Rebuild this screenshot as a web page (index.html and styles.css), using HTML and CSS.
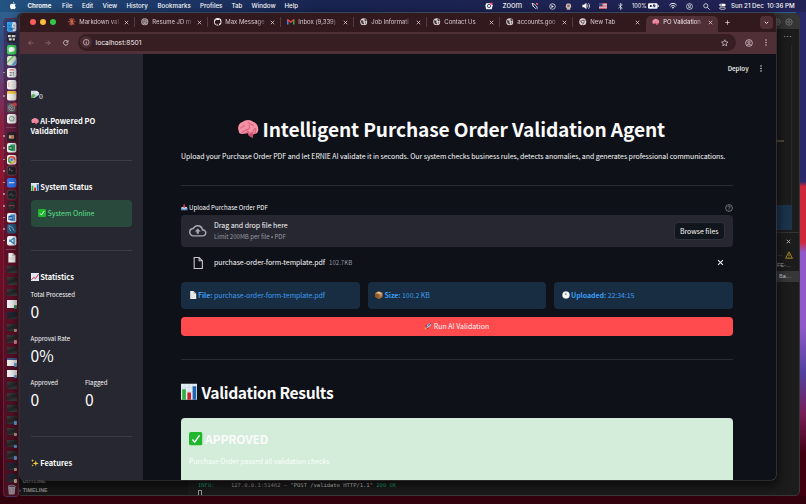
FILE: index.html
```html
<!DOCTYPE html>
<html lang="en">
<head>
<meta charset="utf-8">
<title>PO Validation</title>
<link rel="stylesheet" href="styles.css">
</head>
<body>
<svg class="defs" aria-hidden="true">
  <symbol id="brain" viewBox="0 0 24 20"><path d="M2 13C0 9 2 4 6 3c3-3 9-3 12 0 4 1 6 6 5 10-1 3-4 3-5 3l-1 4-4-2-1-3-6 1c-3 0-4-1-4-3z" fill="#f591a5"/><path d="M4 10c1-3 4-1 4-4m-3 8c3 0 3-3 6-3s3-3 2-5m-4 9c4-1 6 1 8-1s1-4 4-4M12 3c1 3 5 1 6 4m-8 5l3 2m5 1c2 0 3-2 2-4" fill="none" stroke="#d95f7c" stroke-width="1.1"/><path d="M12 16l6-1-1 5-4-2z" fill="#c94d69"/></symbol>
  <symbol id="chart" viewBox="0 0 20 20"><path d="M0 0h20v20H0z" fill="#e2edf4"/><path d="M0 5h20M0 10h20M0 15h20M5 0v20M10 0v20M15 0v20" stroke="#b9cedb" stroke-width=".5"/><path d="M1.500 7h4.500v13H1.500z" fill="#2fae3b"/><path d="M8 11h4.500v9H8z" fill="#c8242d"/><path d="M14.500 3H19v17h-4.500z" fill="#2464b4"/></symbol>
  <symbol id="trend" viewBox="0 0 20 20"><path d="M0 0h20v20H0z" fill="#e9eff3"/><path d="M0 5h20M0 10h20M0 15h20M5 0v20M10 0v20M15 0v20" stroke="#b9cedb" stroke-width=".6"/><path d="M1 17l6-6 4 3 8-11" fill="none" stroke="#cf2438" stroke-width="2.500"/></symbol>
  <symbol id="check" viewBox="0 0 20 20"><rect width="20" height="20" rx="3" fill="#20b62d"/><path d="M5 11l3.500 4L15.500 5" fill="none" stroke="#fff" stroke-width="2.200"/></symbol>
  <symbol id="sparkles" viewBox="0 0 20 20"><path d="M12 3l1.500 6 6 2-6 2-1.500 6-1.500-6-6-2 6-2zM4 0l1 3 3 1-3 1-1 3-1-3-3-1 3-1zM4 13l.8 2.300L7 16l-2.200.8L4 19l-.8-2.200L1 16l2.200-.7z" fill="#f4c944"/></symbol>
  <symbol id="inbox" viewBox="0 0 20 20"><path d="M2 9h16l2 5v5H0v-5z" fill="#bdd3e5"/><path d="M0 14h6l2 2h4l2-2h6v5H0z" fill="#5690c8"/><path d="M8 1h4v6h3l-5 6-5-6h3z" fill="#db3546"/></symbol>
  <symbol id="page" viewBox="0 0 20 20"><path d="M3 0h8l7 7v13H3z" fill="#eee"/><path d="M11 0v7h7z" fill="#b5bbc0"/><path d="M5 10h10M5 13h10M5 16h8" stroke="#c9cccf"/></symbol>
  <symbol id="box" viewBox="0 0 20 20"><path d="M1 5l9-4 9 4v10l-9 5-9-5z" fill="#a9703f"/><path d="M1 5l9 4v11l-9-5z" fill="#8f5a30"/><path d="M1 5l9-4 9 4-9 4z" fill="#d3a16b"/><path d="M5 3l9 4v5l2-1V6L7 2z" fill="#ecd0a3"/></symbol>
  <symbol id="clock" viewBox="0 0 20 20"><circle cx="10" cy="10" r="9.500" fill="#b9bcc0"/><circle cx="10" cy="10" r="8" fill="#fafafa"/><path d="M10 4v6.500L7.500 6" fill="none" stroke="#444" stroke-width="1.200"/></symbol>
  <symbol id="rocket" viewBox="0 0 20 20"><path d="M5 13L3 9l5-2 4 8-2 4z" fill="#8e3645"/><path d="M6 13C7 7 12 2 19 1c0 7-5 12-11 14z" fill="#b9c6d2"/><path d="M13 2l5 5 1-6z" fill="#a92a38"/><circle cx="13" cy="7" r="2" fill="#275a80"/><path d="M8 12l4-4" stroke="#47637c" stroke-width="2"/><path d="M1 19l2-6 4 4z" fill="#ffb42c"/></symbol>
  <symbol id="globe" viewBox="0 0 20 20"><circle cx="10" cy="10" r="9.500" fill="#d8d0d2"/><path d="M3 6c3-1 4 1 7 1l-2 4 3 2-1 4C5 17 2 12 3 6zm9-4c3 0 5 3 6 5l-3 2-3-3zm1 10l4-1-3 5z" fill="#48373c"/></symbol>
  <symbol id="gear" viewBox="0 0 20 20"><circle cx="10" cy="10" r="8" fill="none" stroke="currentColor" stroke-width="2"/><circle cx="10" cy="10" r="3" fill="none" stroke="currentColor" stroke-width="2"/><path d="M10 2v5M10 13v5M2 10h5M13 10h5" stroke="currentColor"/></symbol>
  <symbol id="person" viewBox="0 0 20 20"><circle cx="10" cy="10" r="8.500" fill="none" stroke="currentColor" stroke-width="1.800"/><circle cx="10" cy="8" r="3" fill="none" stroke="currentColor" stroke-width="1.800"/><path d="M4 16c2-4 10-4 12 0" fill="none" stroke="currentColor" stroke-width="1.800"/></symbol>
  <symbol id="x" viewBox="0 0 10 10"><path d="M1.500 1.500l7 7m0-7l-7 7" stroke="currentColor" stroke-width="1.500" fill="none"/></symbol>
  <symbol id="dots" viewBox="0 0 10 20"><g fill="currentColor"><circle cx="5" cy="3" r="2"/><circle cx="5" cy="10" r="2"/><circle cx="5" cy="17" r="2"/></g></symbol>
</svg>

<div class="desktop">
  <header class="menubar">
    <svg class="apple" viewBox="0 0 16 20"><path d="M11 0c0 2-1 4-3.500 4.300C7.500 2 9 .5 11 0zM8 5.500c1 0 2-1 4-1 1.500 0 2.500.8 3.200 1.700-3.200 2-2.600 6 .6 7.300C15 16.500 13 19.500 11 19.500c-1 0-1.700-.6-3-.6s-2 .6-3 .6C2.500 19.500 0 15 0 11c0-4 2.500-6.300 5-6.300 1.300 0 2.200.8 3 .8z" fill="#fff"/></svg>
    <nav class="menus"><b>Chrome</b><span>File</span><span>Edit</span><span>View</span><span>History</span><span>Bookmarks</span><span>Profiles</span><span>Tab</span><span>Window</span><span>Help</span></nav>
    <div class="status">
      <svg class="s8" viewBox="0 0 20 20"><path d="M3 3h13l3 5-2 10H3L1 9z" fill="#fff"/><circle cx="10" cy="10" r="4" fill="none" stroke="#23285b" stroke-width="2"/><circle cx="16" cy="4" r="3" fill="#ff4562"/></svg>
      <span class="zoomword">zoom</span>
      <svg class="s8" viewBox="0 0 20 20"><path d="M2 4l6 1 9 9M4 9l8 8M13 3l3 3M3 3l3 9M13 14l4 4" stroke="#fff" stroke-width="2" fill="none"/><circle cx="16" cy="5" r="2.500" fill="#f24d66"/></svg>
      <svg class="s7" viewBox="0 0 20 20"><circle cx="10" cy="10" r="8" fill="none" stroke="#fff" stroke-width="2"/><path d="M7 6l7 4-7 4z" fill="#fff"/></svg>
      <svg class="s7" viewBox="0 0 20 20"><path d="M3 5c1-5 13-5 14 0l1 7-3 2v5H5v-5l-3-2z" fill="#cfbfc0"/><circle cx="10" cy="8" r="4" fill="#a06f69"/></svg>
      <svg class="s8" viewBox="0 0 20 20"><path d="M1 7h4l6-5v16l-6-5H1z" fill="#fff"/><path d="M13 6c2 2 2 6 0 8M16 3c4 4 4 10 0 14" fill="none" stroke="#fff" stroke-width="1.800"/></svg>
      <svg class="s8" viewBox="0 0 20 14"><path d="M0 0h20v14H0z" fill="#eee"/><path d="M0 1h20M0 5h20M0 9h20M0 13h20" stroke="#d83b50" stroke-width="2"/><path d="M0 0h9v8H0z" fill="#334a83"/></svg>
      <svg class="s7" viewBox="0 0 20 20"><path d="M4 5l11 10-5 4V1l5 4L4 15" fill="none" stroke="#fff" stroke-width="1.800"/></svg>
      <span class="battery">100%<svg viewBox="0 0 24 12"><rect width="21" height="12" rx="3" fill="#fff"/><path d="M22.500 4v4" stroke="#fff" stroke-width="2"/><path d="M4 4h4v4H4zm8-2l-2 5h4l-2 4 6-6h-4l1-3z" fill="#23285b"/></svg></span>
      <svg class="s8" viewBox="0 0 20 16"><path d="M1 6c5-6 13-6 18 0M4 10c3-4 9-4 12 0" fill="none" stroke="#fff" stroke-width="2.400"/><path d="M7 12c2-2 4-2 6 0l-3 3z" fill="#fff"/></svg>
      <svg class="s7"><use href="#person"/></svg>
      <svg class="s7" viewBox="0 0 20 20"><circle cx="8" cy="8" r="6" fill="none" stroke="#fff" stroke-width="2"/><path d="M12.500 12.500L19 19" stroke="#fff" stroke-width="2.400"/></svg>
      <svg class="s7" viewBox="0 0 20 20"><rect x="1" y="2" width="18" height="7" rx="3.500" fill="#fff"/><rect x="2" y="12" width="16" height="6" rx="3" fill="none" stroke="#fff" stroke-width="2"/><circle cx="6" cy="5.500" r="2" fill="#23285b"/></svg>
    </div>
    <time>Sun 21 Dec&nbsp; 10:36 PM</time>
  </header>

  <section class="editor">
    <div class="editor-title"><svg><use href="#gear"/></svg><svg><use href="#gear"/></svg></div>
    <div class="editor-body">
      <aside class="rail">
        <div class="more">⋯</div>
        <div class="minimap"><i></i></div>
        <div class="hilite"></div>
        <div class="panel-tools"><svg><use href="#x"/></svg></div>
        <div class="term-item warn">…<svg viewBox="0 0 20 20"><path d="M10 2l8.500 16h-17z" fill="none" stroke="#c2a02c" stroke-width="2"/><path d="M10 8v5m0 1.500v2" stroke="#c2a02c" stroke-width="2"/></svg></div>
        <div class="term-item">FE-…</div>
        <div class="term-item on">Ba…</div>
      </aside>
    </div>
    <footer class="editor-foot">
      <div class="outline"><p>OUTLINE</p><p><span>›</span>TIMELINE</p></div>
      <div class="log"><p><em>INFO:</em><span>127.0.0.1:51462 – <b>"POST /validate HTTP/1.1"</b> <em>200 OK</em></span></p><i></i></div>
    </footer>
  </section>

  <aside class="dock">
    <div class="d run"><svg viewBox="0 0 20 20"><rect width="20" height="20" rx="4" fill="#eaf4fb"/><path d="M4 0h8l-2 11h2v9H4a4 4 0 01-4-4V4a4 4 0 014-4z" fill="#2c9bf0"/><path d="M5 6v3m10-3v3M4 13c4 3 8 3 12 0" stroke="#1b3b60" stroke-width="1.500" fill="none"/></svg></div>
    <div class="d"><svg viewBox="0 0 20 20"><rect width="20" height="20" rx="4" fill="#25242c"/><path d="M2 4h6v5H2zm8 0h8v5h-8zM4 11h6v5H4zm8 0h5v5h-5z" fill="#dedee0"/></svg></div>
    <div class="d"><svg viewBox="0 0 20 20"><rect width="20" height="20" rx="4" fill="#42cf5c"/><ellipse cx="10" cy="9.500" rx="6.500" ry="5" fill="#fff"/><path d="M5 12l-1 4 5-2z" fill="#fff"/></svg></div>
    <div class="d"><svg viewBox="0 0 20 20"><rect width="20" height="20" rx="4" fill="#dfe8d0"/><path d="M0 12L12 0h4L0 16z" fill="#63c865"/><path d="M8 20L20 7v8l-4 5z" fill="#67aeea"/></svg></div>
    <div class="d run"><svg viewBox="0 0 20 20"><rect width="20" height="20" rx="4" fill="#f7f5f6"/><path d="M5 4h10" stroke="#e84e50" stroke-width="2"/><text x="4" y="16" font-size="11">21</text></svg></div>
    <div class="d"><svg viewBox="0 0 20 20"><rect width="20" height="20" rx="4" fill="#f7f5f6"/><path d="M4 5v10" stroke="#e89350" stroke-width="1.500"/><path d="M7 5h9M7 10h9M7 15h9" stroke="#ccc"/></svg></div>
    <div class="d run"><svg viewBox="0 0 20 20"><rect width="20" height="20" rx="4" fill="#f8f4eb"/><path d="M0 6V4a4 4 0 014-4h12a4 4 0 014 4v2z" fill="#f6c847"/></svg></div>
    <div class="d"><svg class="dg" viewBox="0 0 20 20"><rect width="20" height="20" rx="4" fill="#555158"/><use href="#gear" x="2" y="2" width="16" height="16"/><circle cx="17" cy="3" r="4" fill="#f34646"/></svg></div>
    <div class="d"><svg viewBox="0 0 20 20"><rect width="20" height="20" rx="4" fill="#ecefed"/><circle cx="10" cy="10" r="5" fill="none" stroke="#769087" stroke-width="2"/><path d="M7 13l6-6" stroke="#769087"/></svg></div>
    <hr>
    <div class="d run"><svg viewBox="0 0 20 20"><rect width="20" height="20" rx="4" fill="#29242b"/><path d="M4 7h11v7H4z" fill="#cbb099"/><path d="M9 7h5v7H9z" fill="#ce7844"/></svg></div>
    <div class="d run"><svg viewBox="0 0 20 20"><rect width="20" height="20" rx="4" fill="#f4f7f5"/><path d="M7 3h10v14H7z" fill="#36a66b"/><path d="M3 6h9v9H3z" fill="#13743f"/><path d="M5 8l5 5m0-5l-5 5" stroke="#fff" stroke-width="1.300"/></svg></div>
    <div class="d run"><svg viewBox="0 0 20 20"><rect width="20" height="20" rx="4" fill="#f6f4f4"/><circle cx="10" cy="10" r="8" fill="#e84939"/><path d="M10 10L3 6a8 8 0 006 12z" fill="#3dac5a"/><path d="M10 10h8a8 8 0 01-9 8z" fill="#f7cc43"/><circle cx="10" cy="10" r="3.800" fill="#4484e5" stroke="#fff" stroke-width="1.200"/></svg></div>
    <div class="d run"><svg viewBox="0 0 20 20"><rect x=".5" y=".5" width="19" height="19" rx="4" fill="#242127" stroke="#777"/><path d="M4 5l3 2-3 2m4 1h4" stroke="#ccc" fill="none"/></svg></div>
    <div class="d run"><svg viewBox="0 0 20 20"><rect width="20" height="20" rx="4" fill="#2e73e8"/><path d="M4 10h12" stroke="#d5e5ff" stroke-width="2.500"/></svg></div>
    <div class="d run"><svg viewBox="0 0 20 20"><rect x=".5" y=".5" width="19" height="19" rx="4" fill="#202328" stroke="#666"/><path d="M3 11h4l2-4 3 7 2-3h3" stroke="#6d7e78" fill="none"/></svg></div>
    <div class="d run"><svg viewBox="0 0 20 20"><rect width="20" height="20" rx="4" fill="#28252b"/><circle cx="10" cy="10" r="6" fill="none" stroke="#55525a"/><path d="M4 10h12" stroke="#db4650" stroke-width="1.500"/></svg></div>
    <div class="d run"><svg viewBox="0 0 20 20"><rect width="20" height="20" rx="4" fill="#f3f6fa"/><path d="M7 3h10v14H7z" fill="#4898dc"/><path d="M3 6h9v9H3z" fill="#1e57a9"/><path d="M4 8l2 5 2-4 1 4 2-5" stroke="#fff" fill="none"/></svg></div>
    <div class="d run"><svg viewBox="0 0 20 20"><rect width="20" height="20" rx="4" fill="#26577f"/><path d="M3 4c6 0 10 4 11 9l3 3M4 7l4 8" stroke="#bad4e5" stroke-width="1.500" fill="none"/></svg></div>
    <div class="d run"><svg viewBox="0 0 20 20"><rect width="20" height="20" rx="4" fill="#f4f7fa"/><path d="M15 3v14l-10-9M15 4L5 12" stroke="#2685ca" stroke-width="2.500" fill="none"/></svg></div>
    <hr>
    <div class="d"><svg viewBox="0 0 20 20"><path d="M3 0h9l6 6v14H3z" fill="#f4f4f5"/><path d="M12 0v6h6zM5 10h10M5 13h10" fill="#bbb" stroke="#bbb"/></svg></div>
    <div class="d t"><i></i></div><div class="d t"><i></i></div><div class="d t"><i></i></div>
    <div class="d t w"><i class="g"></i></div><div class="d t n"><i></i></div><div class="d t"><i class="o"></i></div><div class="d t"><i class="r"></i></div><div class="d t"><i></i></div>
    <div class="d t h"><i class="b"></i></div><div class="d t w"><i class="b"></i></div><div class="d t"><i></i></div><div class="d t"><i></i></div><div class="d t"><i></i></div><div class="d t"><i class="b"></i></div>
    <div class="d t"><i class="o"></i></div><div class="d t"><i class="b"></i></div><div class="d t"><i class="b"></i></div><div class="d t n"><i class="o"></i></div><div class="d t n"><i class="o"></i></div>
    <div class="d"><svg viewBox="0 0 20 20"><path d="M2 2h16l-2 18H4z" fill="#8e868e"/><ellipse cx="10" cy="3" rx="8" ry="2.500" fill="#4d464f" stroke="#b7afb7"/><path d="M6 7l1 10m6-10l-1 10" stroke="#665e68"/></svg></div>
  </aside>

  <section class="browser">
    <div class="tabstrip">
      <div class="lights"><i class="red"></i><i class="yellow"></i><i class="green"></i></div>
      <div class="tab"><svg class="fav" viewBox="0 0 20 20"><path d="M10 0v20M0 10h20M3 3l14 14M17 3L3 17M6 1l8 18M14 1L6 19" stroke="#d96b4d" stroke-width="2"/></svg><span>Markdown val</span><svg class="x"><use href="#x"/></svg></div>
      <div class="tab"><svg class="fav" viewBox="0 0 20 20"><circle cx="10" cy="10" r="9.500" fill="#b6a7ab"/><path d="M10 3l6 4v6l-6 4-6-4V7zM10 3v7l6 3M4 7l6 3-6 3" fill="none" stroke="#4a373c" stroke-width="1.400"/></svg><span>Resume JD m</span><svg class="x"><use href="#x"/></svg></div>
      <div class="tab"><svg class="fav" viewBox="0 0 20 20"><circle cx="10" cy="10" r="10" fill="#fff"/><path d="M7 20v-4c-4 0-3-3-5-3m5 3c-7-2-5-8-3-9l.5-3L8 5.500h5L16 4l.5 3c2 3 2 7-3 8.500V20z" fill="#32191e"/></svg><span>Max Message</span><svg class="x"><use href="#x"/></svg></div>
      <div class="tab"><svg class="fav" viewBox="0 0 20 16"><path d="M2 15V2" stroke="#4285f4" stroke-width="4"/><path d="M18 15V2" stroke="#34a853" stroke-width="4"/><path d="M1 2l9 7 9-7" fill="none" stroke="#ea4335" stroke-width="4"/></svg><span>Inbox (9,339)</span><svg class="x"><use href="#x"/></svg></div>
      <div class="tab"><svg class="fav"><use href="#globe"/></svg><span>Job Informati</span><svg class="x"><use href="#x"/></svg></div>
      <div class="tab"><svg class="fav"><use href="#globe"/></svg><span>Contact Us</span><svg class="x"><use href="#x"/></svg></div>
      <div class="tab"><svg class="fav"><use href="#globe"/></svg><span>accounts.goo</span><svg class="x"><use href="#x"/></svg></div>
      <div class="tab last"><svg class="fav" viewBox="0 0 20 20"><circle cx="10" cy="10" r="9.500" fill="#ded4d6"/><circle cx="10" cy="10" r="4" fill="#ded4d6" stroke="#49363b" stroke-width="1.800"/><path d="M10 6h9M6.500 12L2 5M13.500 12L9 19" stroke="#49363b" stroke-width="1.500"/></svg><span>New Tab</span><svg class="x"><use href="#x"/></svg></div>
      <div class="tab active"><svg class="fav"><use href="#brain"/></svg><span>PO Validation</span><svg class="x"><use href="#x"/></svg></div>
      <svg class="plus" viewBox="0 0 10 10"><path d="M5 .5v9M.5 5h9" stroke="#eadfe2" stroke-width="1.400"/></svg>
      <div class="drop"><svg viewBox="0 0 10 10"><path d="M1.500 3.500L5 7l3.500-3.500" stroke="#eadfe2" stroke-width="2" fill="none"/></svg></div>
    </div>
    <div class="toolbar">
      <div class="nav">
        <svg class="dim" viewBox="0 0 10 10"><path d="M9.500 5H1m4-4L1 5l4 4"/></svg>
        <svg class="dim" viewBox="0 0 10 10"><path d="M.5 5H9M5 1l4 4-4 4"/></svg>
        <svg viewBox="0 0 10 10"><path d="M8.700 6A4 4 0 118 2.400M8.800.5v3.200H5.600"/></svg>
      </div>
      <div class="url"><b class="info"><svg viewBox="0 0 10 10"><circle cx="5" cy="5" r="4.300" fill="none" stroke="#e5d9dc"/><path d="M5 4.500v3M5 2.400v1" stroke="#e5d9dc" stroke-width="1.100"/></svg></b><span>localhost:8501</span><svg class="star" viewBox="0 0 20 20"><path d="M10 2l2.500 5.500 6 .6-4.500 4 1.300 6L10 15l-5.300 3.100 1.300-6-4.500-4 6-.6z" fill="none" stroke="#e5d9dc" stroke-width="1.800"/></svg></div>
      <svg class="who"><use href="#person"/></svg>
      <svg class="kebab"><use href="#dots"/></svg>
    </div>
    <div class="page">
      <aside class="sidebar">
        <div class="broken"><svg viewBox="0 0 20 20"><path d="M0 2h13l6 5v4L8 19H0z" fill="#d2dce3"/><path d="M13 2v5h6z" fill="#fff"/><path d="M0 14c4-6 7-6 11-1L5 19H0z" fill="#57a957"/></svg><span>0</span></div>
        <h3 class="brand"><svg class="em"><use href="#brain"/></svg> AI-Powered PO<br>Validation</h3>
        <hr>
        <h3 class="st"><svg class="em"><use href="#chart"/></svg> System Status</h3>
        <div class="online"><svg class="em"><use href="#check"/></svg> System Online</div>
        <hr class="hr2">
        <h3 class="stat"><svg class="em"><use href="#trend"/></svg> Statistics</h3>
        <div class="metric"><label>Total Processed</label><strong>0</strong></div>
        <div class="metric"><label>Approval Rate</label><strong>0%</strong></div>
        <div class="pair"><div class="metric"><label>Approved</label><strong>0</strong></div><div class="metric"><label>Flagged</label><strong>0</strong></div></div>
        <hr class="hr3">
        <h3 class="feat"><svg class="em"><use href="#sparkles"/></svg> Features</h3>
      </aside>
      <main>
        <div class="apphead"><span>Deploy</span><svg><use href="#dots"/></svg></div>
        <div class="content">
          <h1><svg><use href="#brain"/></svg><span>Intelligent Purchase Order Validation Agent</span></h1>
          <p class="intro">Upload your Purchase Order PDF and let ERNIE AI validate it in seconds. Our system checks business rules, detects anomalies, and generates professional communications.</p>
          <hr>
          <div class="label"><svg class="em"><use href="#inbox"/></svg><span>Upload Purchase Order PDF</span><svg class="help" viewBox="0 0 20 20"><circle cx="10" cy="10" r="8.500"/><path d="M7.200 8c0-4 5.600-4 5.600-.5 0 2-2.800 2.300-2.800 4.500m0 1.500v2"/></svg></div>
          <div class="drop-zone">
            <svg class="cloud" viewBox="0 0 24 24"><path d="M19.350 10.040A7.490 7.490 0 0012 4C9.110 4 6.600 5.640 5.350 8.040A5.994 5.994 0 000 14c0 3.310 2.690 6 6 6h13c2.760 0 5-2.240 5-5 0-2.640-2.050-4.780-4.650-4.960zM19 18H6c-2.210 0-4-1.790-4-4 0-2.050 1.530-3.760 3.560-3.970l1.070-.11.5-.95A5.469 5.469 0 0112 6c2.620 0 4.880 1.860 5.390 4.430l.3 1.500 1.530.11A2.980 2.980 0 0122 15c0 1.650-1.350 3-3 3zM8 13h2.550v3h2.900v-3H16l-4-4z"/></svg>
            <div class="hint"><p>Drag and drop file here</p><small>Limit 200MB per file • PDF</small></div>
            <button>Browse files</button>
          </div>
          <div class="file"><svg class="doc" viewBox="0 0 18 22"><path d="M2 1h9l6 6v14H2zM11 1v6h6"/></svg><span class="name">purchase-order-form-template.pdf</span><small>102.7KB</small><svg class="x"><use href="#x"/></svg></div>
          <div class="infos">
            <div><svg class="em"><use href="#page"/></svg><b>File:</b> <span>purchase-order-form-template.pdf</span></div>
            <div><svg class="em"><use href="#box"/></svg><b>Size:</b> <span>100.2 KB</span></div>
            <div><svg class="em"><use href="#clock"/></svg><b>Uploaded:</b> <span>22:34:15</span></div>
          </div>
          <div class="run-btn"><svg class="em"><use href="#rocket"/></svg>Run AI Validation</div>
          <hr class="hr4">
          <h2><svg><use href="#chart"/></svg><span>Validation Results</span></h2>
          <div class="result"><h4><svg><use href="#check"/></svg>APPROVED</h4><p>Purchase Order passed all validation checks</p></div>
        </div>
      </main>
    </div>
  </section>
</div>
</body>
</html>
```
FILE: styles.css
```css
* { box-sizing: border-box; margin: 0; padding: 0; }
body { width: 806px; height: 504px; overflow: hidden; font-family: "Inter", sans-serif; color: #fafafa; }
svg { display: block; flex: none; overflow: visible; }
.defs { position: absolute; width: 0; height: 0; }
hr { border: 0; height: 1px; background: #2a2c34; }

.desktop {
  position: relative; width: 806px; height: 504px; overflow: hidden;
  background:
    linear-gradient(#33000d, #33000d) 0 100% / 100% 8px no-repeat,
    linear-gradient(#28286a 0 36%, #d02639 37% 48%, #9058ca 50% 65%, #5040a0 74%, #781c58 82%, #400010 90%) 100% 0 / 10px 100% no-repeat,
    linear-gradient(#326592, #2b5288 8%, #62437c 15%, #8c2144 23%, #94152f 32%, #750d27 50%, #4d071c 80%, #360010);
}

/* menu bar */
.menubar { height: 12px; display: flex; align-items: center; background: linear-gradient(90deg, #235381, #1d3a6c 18%, #192450 40%, #222255); font-size: 6.200px; line-height: 12px; padding: 0 9px 0 10px; white-space: nowrap; }
.apple { width: 6px; height: 7.500px; margin-right: 11.500px; }
.menus { display: grid; grid-template-columns: 34.500px 20px 20.500px 24px 31px 42.500px 31.500px 20px 33px 20px; }
.menus span { font-weight: 500; }
.status { display: flex; align-items: center; margin-left: auto; color: #fff; height: 12px; gap: 9.500px; margin-right: 5px; }
.s8 { width: 8px; height: 8px; }
.s7 { width: 7px; height: 7px; }
.zoomword { font-size: 7.600px; width: 20px; letter-spacing: -.1px; margin: 0 -1px 0 0; }
.battery { display: flex; align-items: center; gap: 1.500px; font-size: 5.500px; width: 27px; margin-left: -1px; }
.battery svg { width: 11px; height: 6px; }
.menubar time { font-weight: 500; width: 66px; }

/* editor window */
.editor { position: absolute; left: 17px; top: 13px; width: 783px; height: 483px; border-radius: 5px; background: #1c1c1c; border: 1px solid #373638; display: flex; flex-direction: column; overflow: hidden; font-family: "Liberation Sans", sans-serif; color: #a5a5a5; }
.editor-title { height: 15px; background: #353536; display: flex; justify-content: flex-end; align-items: center; gap: 4px; padding-right: 6px; color: #777; }
.editor-title svg { width: 8px; height: 8px; }
.editor-body { flex: 1; display: flex; justify-content: flex-end; }
.rail { width: 25px; font-size: 5.500px; }
.more { height: 16px; line-height: 16px; text-align: right; padding-right: 7px; font-size: 9px; }
.minimap { height: 160px; border-right: 1px solid #28282a; width: 18px; padding-top: 95px; }
.minimap i { display: block; height: 1.500px; width: 9px; background: #514638; margin-left: 1px; }
.hilite { height: 25px; width: 18px; background: #1b344c; }
.panel-tools { height: 17px; margin-top: 2px; border-top: 1px solid #333; display: flex; align-items: center; justify-content: flex-end; padding-right: 8px; color: #ccc; }
.panel-tools svg { width: 5px; height: 5px; }
.term-item { height: 11px; line-height: 11px; padding-left: 3px; white-space: nowrap; overflow: hidden; }
.term-item.on { background: #37373a; padding-left: 5px; color: #ccc; }
.warn { display: flex; gap: 2px; align-items: center; }
.warn svg { width: 8px; height: 8px; }
.editor-foot { height: 16px; display: flex; }
.outline { width: 170px; font-size: 5.300px; font-weight: bold; color: #999; background: #181818; }
.outline p { height: 10px; line-height: 11px; padding-left: 1px; }
.outline p:first-child { height: 6px; line-height: 4px; padding-left: 4.500px; }
.outline span { padding-right: 2px; font-weight: 400; }
.log { flex: 1; padding-left: 10px; font: 5.500px/9px "DejaVu Sans Mono", monospace; letter-spacing: -.01px; }
.log p { display: flex; white-space: pre; padding-top: 1.500px; }
.log em { font-style: normal; color: #21a572; }
.log p > em { width: 33px; }
.log b { font-weight: 400; color: #d5d5d5; }
.log i { display: block; width: 3.500px; height: 6px; border: 1px solid #999; }

/* dock */
.dock { position: absolute; left: 2.500px; top: 18px; width: 16px; height: 479px; border-radius: 4px; padding-top: 1.500px; background: linear-gradient(rgba(45,50,100,.75), rgba(86,32,67,.75) 20%, rgba(95,18,42,.8) 35%, rgba(78,18,37,.8)); border: 1px solid rgba(150,80,110,.3); }
.d { height: 11.600px; display: flex; align-items: center; padding-left: 3px; position: relative; }
.d svg { width: 9.400px; height: 9.400px; }
.d text { font-family: Inter, sans-serif; fill: #555; }
.dg { color: #b8b0b8; }
.dock hr { height: 1px; background: #7a4058; margin: 2.300px 2px; }
.run::before { content: ""; position: absolute; left: -.5px; top: 5px; width: 1.500px; height: 1.500px; border-radius: 50%; background: #b09aa8; }
.t i { display: block; width: 10px; height: 7.500px; background: linear-gradient(160deg, #3d3e40, #222426 50%, #45494a); position: relative; }
.t.w i { background: #f0f0f2; }
.t.h i { background: linear-gradient(#42598c 30%, #eee 30%); }
.t.n i { background: linear-gradient(160deg, #172741, #222426 60%, #30425a); }
.t i[class]::after { content: ""; position: absolute; right: -.5px; bottom: -1px; width: 3.500px; height: 3.500px; border-radius: 1px; background: #5fa2e0; }
.t i.o::after { background: #c3a786; }
.t i.g::after { background: #318a59; }
.t i.r::after { background: #ea839c; }

/* browser window */
.browser { position: absolute; left: 20px; top: 12.500px; width: 756px; height: 467.500px; border-radius: 5px; background: #0e1118; overflow: hidden; box-shadow: 0 0 0 .6px #4d4448, 0 4px 10px 3px rgba(0,0,0,.55); }
.tabstrip { height: 19px; background: #32191e; display: flex; align-items: center; }
.lights { display: flex; gap: 3.700px; width: 42px; padding-left: 10.200px; }
.lights i { width: 6px; height: 6px; border-radius: 50%; background: #fb5e5b; }
.lights .yellow { background: #fbbc3c; }
.lights .green { background: #35c648; }
.tab { width: 73px; height: 10px; display: flex; align-items: center; padding-left: 6px; font-size: 6px; line-height: 10px; color: #d9cbcf; border-right: 1px solid #523b41; }
.tab.last { border-right-color: transparent; }
.tab .fav { width: 7.500px; height: 7.500px; margin-right: 3.800px; }
.tab span { width: 41px; margin-right: 4px; white-space: nowrap; letter-spacing: -.02px; -webkit-mask-image: linear-gradient(90deg, #000 78%, transparent 104%); mask-image: linear-gradient(90deg, #000 78%, transparent 104%); }
.tab .x { width: 5px; height: 5px; color: #e3d6da; }
.tab.active { margin-top: 3px; padding-bottom: 3px; height: 16px; background: #512f36; border: 0; border-radius: 5px 5px 0 0; color: #f0e6e9; width: 72px; margin-right: 7px; }
.plus { width: 5px; height: 5px; }
.drop { width: 13px; height: 13px; border-radius: 4px; background: #512f36; margin-left: auto; margin-right: 3.500px; display: grid; place-items: center; }
.drop svg { width: 5px; height: 5px; }
.toolbar { height: 22.500px; background: #512f36; display: flex; align-items: center; }
.nav { display: flex; gap: 11.500px; width: 58px; padding-left: 8px; }
.nav svg { width: 5.800px; height: 5.800px; fill: none; stroke: #eadfe2; stroke-width: 1.300; }
.nav .dim { stroke: #8f747a; }
.url { width: 658px; height: 17.500px; margin-top: -1px; border-radius: 9px; background: #371e23; display: flex; align-items: center; padding: 0 8px 0 2px; font-size: 6.750px; color: #f1e8ea; }
.info { width: 12px; height: 12px; border-radius: 50%; background: #4b2c33; display: grid; place-items: center; margin-right: 3.500px; }
.info svg { width: 6.500px; height: 6.500px; }
.star { width: 7.500px; height: 7.500px; margin-left: auto; }
.who { width: 8px; height: 8px; color: #e0d2d6; margin-left: 8.500px; }
.kebab { width: 4px; height: 7px; color: #e0d2d6; margin-left: 11.500px; }
.page { display: flex; height: 426px; font-family: "Noto Sans CJK JP", "Noto Sans", sans-serif; }
.em { display: inline-block; width: 8px; height: 8px; vertical-align: -1px; }

/* sidebar */
.sidebar { width: 123px; background: #262730; padding: 36.300px 11px 0 10.500px; white-space: nowrap; }
.sidebar hr { background: #3b3c45; }
.broken { display: flex; height: 10px; font-size: 7px; line-height: 13px; }
.broken svg { width: 8.500px; height: 8.500px; }
.sidebar h3 { font-size: 7.500px; line-height: 10.300px; height: 10.300px; font-weight: 700; }
.sidebar h3.brand { margin: 15.800px 0 23.300px; height: 20.600px; }
.sidebar h3.st { margin: 20.800px 0 8px; }
.online { height: 26.500px; border-radius: 4px; background: #29493c; color: #5ee08d; font-size: 7px; line-height: 26.500px; padding-left: 7.500px; }
.hr2 { margin-top: 23px; }
.sidebar h3.stat { margin: 21px 0 8.500px; }
.metric { height: 44px; }
.metric label { display: block; font-size: 6.100px; line-height: 10px; height: 10px; }
.metric strong { display: block; font-size: 15.700px; font-weight: 400; line-height: 20px; height: 20px; margin-top: 2px; }
.pair { display: grid; grid-template-columns: 54.500px 1fr; }
.hr3 { margin-top: 14px; }
.sidebar h3.feat { margin-top: 21px; }

/* main */
main { flex: 1; }
.apphead { height: 28px; display: flex; align-items: center; justify-content: flex-end; font-size: 6.200px; font-weight: 500; padding-right: 13px; }
.apphead svg { width: 4px; height: 7px; margin-left: 10.500px; }
.content { width: 551.500px; margin-left: 38px; padding-top: 34.500px; }
h1 { display: flex; align-items: center; justify-content: center; gap: 4px; height: 26px; font-size: 19.150px; line-height: 25px; font-weight: 700; white-space: nowrap; letter-spacing: -.12px; padding-right: 12px; }
h1 svg { width: 22px; height: 19px; margin-top: -2px; }
h1 span { margin-top: -1px; }
.intro { height: 10px; line-height: 10px; margin-top: 8px; font-size: 6.980px; letter-spacing: -.045px; white-space: nowrap; }
.content hr { margin-top: 24px; }
.label { display: flex; align-items: center; height: 10px; margin-top: 17px; font-size: 6.100px; line-height: 10px; }
.label .em { width: 6.500px; height: 6.500px; margin-right: 1.500px; }
.help { width: 8px; height: 8px; margin-left: auto; fill: none; stroke: #a0a2a9; stroke-width: 1.600; }
.drop-zone { height: 32px; margin-top: 2.500px; border-radius: 4px; background: #262730; display: flex; align-items: center; padding: 0 8px; }
.cloud { width: 17.500px; height: 17.500px; fill: #a8aab2; margin-right: 7.500px; }
.hint p { font-size: 7px; line-height: 11px; letter-spacing: -.03px; }
.hint small { display: block; font-size: 6.100px; line-height: 11px; color: #9698a0; letter-spacing: -.02px; }
.drop-zone button { margin-left: auto; width: 50.500px; height: 18.500px; border: 1px solid #30323b; border-radius: 4px; background: #11151c; color: #fafafa; font: 6.900px/15px "Noto Sans CJK JP", sans-serif; white-space: nowrap; }
.file { height: 31px; display: flex; align-items: center; }
.doc { width: 10px; height: 12px; margin-left: 11.500px; fill: none; stroke: #c8c9ce; stroke-width: 2; }
.name { font-size: 7px; margin-left: 11.500px; letter-spacing: -.06px; margin-top: -1px; }
.file small { font-size: 6.100px; color: #9698a0; margin-left: 4px; margin-top: -1px; }
.file .x { width: 7px; height: 7px; margin-left: auto; margin-right: 9px; color: #f0f0f0; }
.infos { display: grid; grid-template-columns: repeat(3, 1fr); gap: 8px; margin-top: 4px; }
.infos div { height: 27px; line-height: 27px; border-radius: 4px; background: #182d41; color: #3d9df3; padding-left: 7.500px; font-size: 7px; letter-spacing: -.06px; white-space: nowrap; }
.infos .em { margin-right: 1.500px; }
.run-btn { height: 19.500px; margin-top: 7.500px; border-radius: 4px; background: #ff4b4e; display: flex; align-items: center; justify-content: center; font-size: 7px; line-height: 18px; }
.run-btn .em { margin-right: 1.500px; }
.content .hr4 { margin-top: 22.500px; }
h2 { display: flex; align-items: center; gap: 4.500px; height: 24px; margin-top: 21.500px; font-size: 15.650px; line-height: 24px; font-weight: 700; letter-spacing: -.35px; }
h2 svg { width: 16px; height: 17.500px; margin-top: -2px; }
h2 span { margin-top: -1px; }
.result { height: 63px; margin-top: 13px; border-radius: 4px 4px 0 0; background: #d4edda; padding: 12px 8px 0; }
.result h4 { display: flex; align-items: center; gap: 2.500px; font-size: 12.200px; line-height: 18px; height: 18px; letter-spacing: -.27px; }
.result h4 svg { width: 13.500px; height: 13.500px; }
.result p { font-size: 7px; line-height: 10px; margin-top: 8px; color: #f8fff9; letter-spacing: -.05px; }
```
